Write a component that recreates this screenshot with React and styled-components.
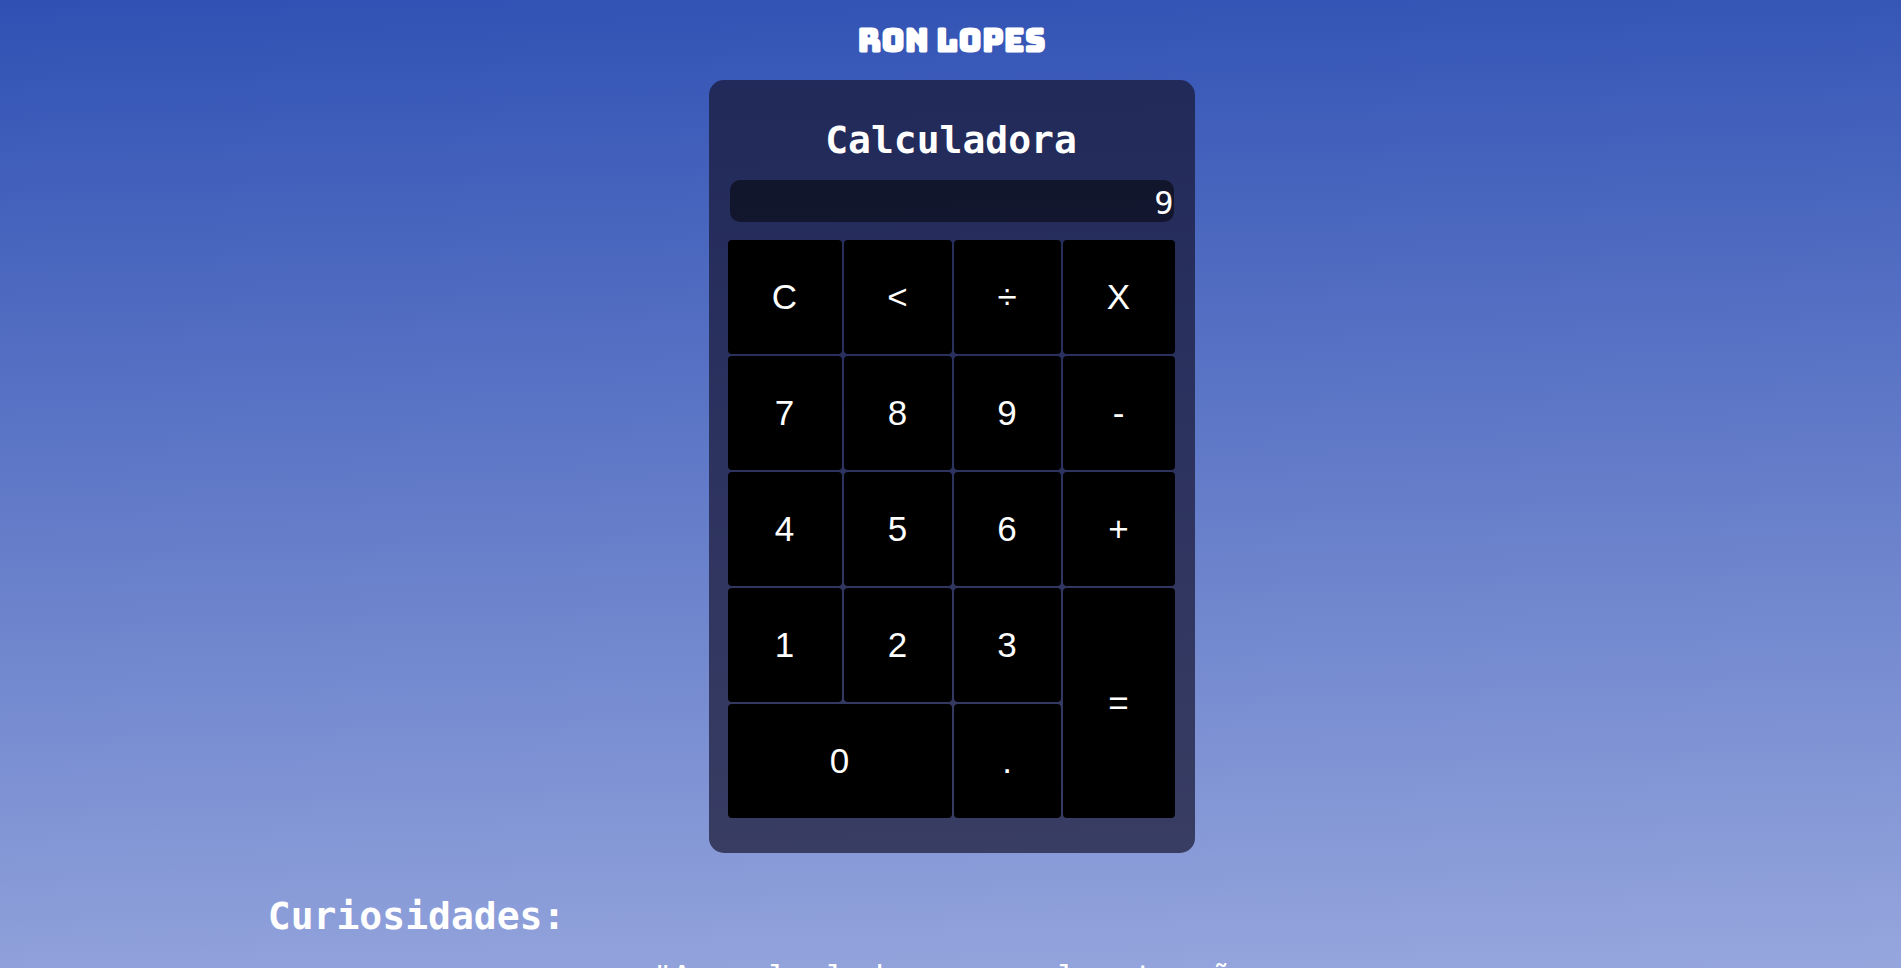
import React, { useState } from "react";
import styled, { createGlobalStyle } from "styled-components";

const GlobalStyle = createGlobalStyle`
  * { box-sizing: border-box; }
  html {
    min-height: 100%;
    background: linear-gradient(178deg, #3051b4, #96a6dd) fixed;
  }
  body {
    margin: 0;
    color: #fff;
    font-family: Consolas, "DejaVu Sans Mono", monospace;
  }
`;

const Page = styled.div`
  display: flex;
  flex-direction: column;
  height: 100vh;
  padding-left: 2px;
  overflow: hidden;
`;

const Brand = styled.header`
  flex: none;
  display: flex;
  justify-content: center;
  align-items: center;
  height: 80px;
  font-family: Bungee, Inter, sans-serif;
  font-size: 32px;
  font-weight: 900;
`;

const Calculator = styled.main`
  flex: none;
  align-self: center;
  width: 486px;
  padding: 35px 20px 35px 19px;
  border-radius: 15px;
  background: rgba(23, 21, 50, 0.7);
`;

const Title = styled.h1`
  margin: 0;
  font-size: 38px;
  line-height: 50px;
  text-align: center;
`;

const Display = styled.output`
  display: block;
  height: 42px;
  margin: 15px 1px 18px 2px;
  border-radius: 10px;
  background: rgba(0, 0, 0, 0.5);
  font-size: 32px;
  line-height: 46px;
  text-align: right;
`;

const Keys = styled.div`
  display: grid;
  grid-template-columns: 114fr 108fr 107fr 112fr;
  grid-auto-rows: 114px;
  gap: 2px;
`;

const Key = styled.button`
  grid-column: span ${(p) => p.$cols || 1};
  grid-row: span ${(p) => p.$rows || 1};
  padding: 0;
  border: 0;
  border-radius: 4px;
  background: #000;
  color: #fff;
  font: 35px Arial, "Liberation Sans", sans-serif;
  cursor: pointer;
`;

const Facts = styled.section`
  flex: none;
  width: 72%;
  margin: 0 auto;
  padding-top: 38px;
`;

const FactsTitle = styled.h2`
  margin: 0;
  font-size: 38px;
  line-height: 50px;
`;

const Quote = styled.p`
  margin: 16px 0 0;
  font-size: 32px;
  line-height: 40px;
  text-align: center;
`;

const keys = [
  { label: "C" }, { label: "<" }, { label: "÷" }, { label: "X" },
  { label: "7" }, { label: "8" }, { label: "9" }, { label: "-" },
  { label: "4" }, { label: "5" }, { label: "6" }, { label: "+" },
  { label: "1" }, { label: "2" }, { label: "3" }, { label: "=", rows: 2 },
  { label: "0", cols: 2 }, { label: "." },
];

const evaluate = (text) => {
  const tokens = text.match(/\d+\.?\d*|\.\d+|[÷X+-]/g) || [];
  const terms = [];
  let sign = 1;
  let op = "";
  for (const t of tokens) {
    if (t === "+" || t === "-") {
      sign = t === "-" ? -1 : 1;
      op = "";
    } else if (t === "X" || t === "÷") {
      op = t;
    } else if (op && terms.length) {
      const last = terms.pop();
      terms.push(op === "X" ? last * Number(t) : last / Number(t));
      op = "";
    } else {
      terms.push(sign * Number(t));
    }
  }
  return String(terms.reduce((a, b) => a + b, 0));
};

export default function App() {
  const [value, setValue] = useState("9");

  const press = (label) => {
    if (label === "C") setValue("");
    else if (label === "<") setValue((v) => v.slice(0, -1));
    else if (label === "=") setValue(evaluate);
    else setValue((v) => v + label);
  };

  return (
    <>
      <GlobalStyle />
      <Page>
        <Brand>RON LOPES</Brand>
        <Calculator>
          <Title>Calculadora</Title>
          <Display>{value}</Display>
          <Keys>
            {keys.map(({ label, cols, rows }) => (
              <Key key={label} type="button" $cols={cols} $rows={rows} onClick={() => press(label)}>
                {label}
              </Key>
            ))}
          </Keys>
        </Calculator>
        <Facts>
          <FactsTitle>Curiosidades:</FactsTitle>
          <Quote>"As calculadoras usualmente são</Quote>
        </Facts>
      </Page>
    </>
  );
}
